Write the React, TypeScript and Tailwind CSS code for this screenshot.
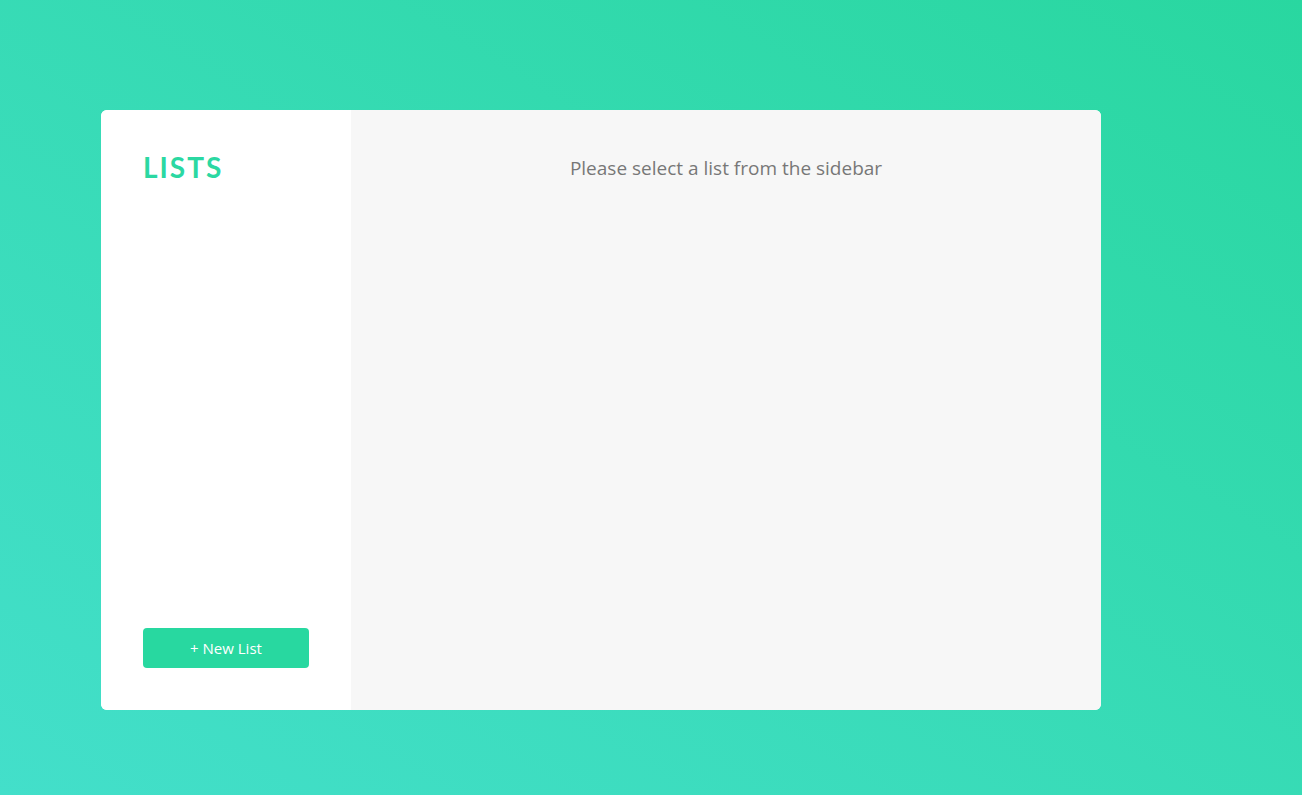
export default function App() {
  return (
    <div className="min-h-[795px] w-full bg-linear-to-tr from-[#43dfca] to-[#29d7a0] pt-[110px] pl-[101px]">
      <div className="flex h-[600px] w-[1000px] overflow-hidden rounded-md bg-white">
        <aside className="flex w-[250px] flex-col justify-between bg-white px-[42px] pt-[43px] pb-[42px]">
          <h1 className="font-['Lato',sans-serif] text-[28px] leading-none font-bold tracking-[2px] text-[#2bd8a2]">
            LISTS
          </h1>
          <button
            type="button"
            className="h-10 w-[166px] rounded bg-[#28d8a0] font-['Open_Sans',sans-serif] text-[15px] text-white"
          >
            + New List
          </button>
        </aside>
        <main className="flex-1 bg-[#f7f7f7] pt-[45px] text-center">
          <p className="font-['Open_Sans',sans-serif] text-[19px] leading-[27px] text-[#777777]">
            Please select a list from the sidebar
          </p>
        </main>
      </div>
    </div>
  );
}
